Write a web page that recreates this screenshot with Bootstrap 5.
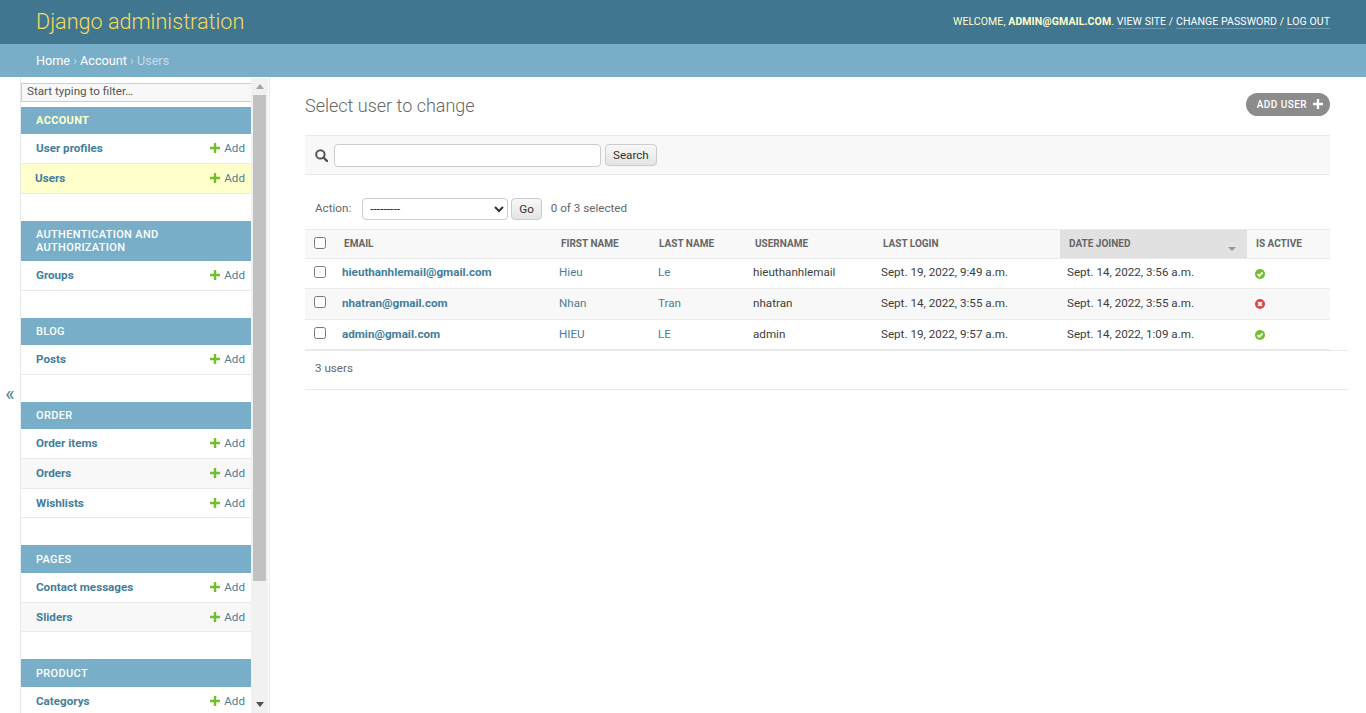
<!DOCTYPE html>
<html lang="en">
<head>
<meta charset="utf-8">
<title>Select user to change</title>
<link rel="stylesheet" href="https://cdn.jsdelivr.net/npm/bootstrap@5.3.0/dist/css/bootstrap.min.css">
<style>
html,body{height:100%}
body{font-family:Roboto,"Liberation Sans",sans-serif;font-size:13px;color:#333;background:#fff;overflow:hidden}
a{text-decoration:none;color:#447e9b}
.adm-head{height:44px;background:#417690;color:#ffc;padding:0 36px}
.adm-brand{font-size:21.6px;font-weight:300;color:#f5dd5d}
.adm-tools{font-size:10.5px;font-weight:400;letter-spacing:.09px;text-transform:uppercase;color:#ffc}
.adm-tools strong{font-weight:700;color:#ffc}
.adm-tools a{color:#fff;border-bottom:1px solid rgba(255,255,255,.25)}
.adm-crumbs{height:33px;background:#79aec8;color:#c4dce8;padding:0 36px 0;font-size:12.65px;font-weight:400}
.adm-crumbs span{padding-top:1px}
.adm-crumbs a{color:#fff}
.adm-main{height:636px}
.adm-toggle{width:21px;border-right:1px solid #eaeaea;color:#447e9b;font-size:20px;line-height:1;padding-bottom:2px}
.adm-side{width:249px;border-right:1px solid #eaeaea;padding-right:1px}
.adm-navcol{width:230px;padding-top:6px;overflow:hidden}
.adm-filter{display:block;width:230px;height:19px;border:1px solid #ccc;background:#f8f8f8;font-size:11.65px;color:#333;padding:0 5px 3px;margin-bottom:5px;line-height:normal;border-right:0}
.adm-filter::placeholder{color:#555;opacity:1}
.adm-block{margin-bottom:27px;width:230px}
.adm-cap{background:#79aec8;color:#fff;font-size:11px;font-weight:500;letter-spacing:.33px;text-transform:uppercase;padding:7px 15px;line-height:13px}
.adm-cap-tall{padding-top:8px}
.adm-cap-cur{color:#ffc;font-weight:700}
.adm-row{height:30px;border-bottom:1px solid #eaeaea;padding:0 6px 0 15px;font-size:11.65px;background:#fff}
.adm-row-short{height:29px;padding-top:1px}
.adm-row:nth-child(odd){background:#f8f8f8}
.adm-row.adm-cur{background:#ffc;padding-left:14px}
.adm-row b{font-weight:700;color:#447e9b}
.adm-addlink{color:#4f7d96;font-weight:400}
.adm-addlink svg{width:10px;height:10px;margin-right:4px}
.adm-sbar{width:17px;background:#f1f1f1;margin-top:1px}
.adm-sbtn{height:17px;color:#505050}
.adm-sbtn svg{width:8px;height:5px}
.adm-thumb{height:486px;background:#c1c1c1;margin:0 2px}
.adm-fill{flex:1}
.adm-content{padding:0 18px 0 35px}
.adm-title{font-size:18px;font-weight:300;color:#666;line-height:22px;margin:0;padding-top:18px}
.adm-addbtn{background:#8c8c8c;color:#fff;border-radius:15px;font-size:10px;font-weight:500;letter-spacing:.45px;text-transform:uppercase;height:23px;padding:0 7px 1px 11px;margin-top:16px}
.adm-addbtn svg{width:10px;height:10px;margin-left:6px}
.adm-box{width:1025px}
.adm-search{height:40px;background:#f8f8f8;border-top:1px solid #eaeaea;border-bottom:1px solid #eaeaea;padding:0 10px;margin-top:18px}
.adm-search svg{width:13px;height:13px;margin-right:6px}
.adm-search input{width:267px;height:23px;border:1px solid #ccc;border-radius:4px;background:#fff;padding:2px 5px;margin-right:4px}
.adm-btn{height:22px;background:linear-gradient(#f8f8f8,#e4e4e4);border:1px solid #ccc;border-radius:4px;font-size:11.65px;color:#333;padding:0 7px;line-height:20px}
.adm-action{height:54px;padding:23px 10px 9px;font-size:11.65px;color:#666}
.adm-action label{margin-right:11px}
.adm-action select{width:146px;height:22px;border:1px solid #ccc;border-radius:4px;background:#fff;font-size:12px;font-family:inherit;padding:0 3px;margin-right:3px;color:#333}
.adm-action span{margin-left:9px}
.adm-tbl{table-layout:fixed;width:1025px;border-collapse:collapse;font-size:11.65px;margin:0}
.adm-c0{width:29px}.adm-c1{width:217px}.adm-c2{width:99px}.adm-c3{width:95px}.adm-c4{width:128px}.adm-c5{width:187px}.adm-c6{width:187px}.adm-c7{width:83px}
.adm-tbl th{background:#f8f8f8;color:#666;font-size:10px;font-weight:700;text-transform:uppercase;height:29px;padding:0 0 1px 10px;border-top:1px solid #eaeaea;border-bottom:1px solid #eaeaea;position:relative}
.adm-tbl th:nth-child(4),.adm-tbl th:nth-child(7),.adm-tbl th:nth-child(8){padding-left:9px}
.adm-tbl th.adm-sorted{background:#e1e1e1}
.adm-tbl td{height:30px;padding:0 0 2px 8px;border-bottom:1px solid #eaeaea;color:#3d3d3d;background:#fff;vertical-align:middle}
.adm-tbl td:nth-child(7){padding-left:7px}
.adm-tbl tr.adm-even td{background:#f8f8f8}
.adm-tbl tr.adm-high td{height:31px}
.adm-tbl tr.adm-low td{padding-bottom:1px}
.adm-tbl tr.adm-base td{padding-bottom:0}
.adm-tbl td a{color:#4f7d96}
.adm-tbl td a.adm-strong{font-weight:700;color:#447e9b}
.adm-tbl tr td.adm-c0cell{padding:0 0 4px 9px}
.adm-tbl tr td.adm-statcell{padding-bottom:0}
.adm-tbl th:first-child{padding:0 0 2px 9px}
.adm-chk{display:block;width:12px;height:12px;margin:0;accent-color:#417690}
.adm-tbl svg.adm-stat{width:10px;height:10px;display:block}
.adm-arrow{position:absolute;right:11px;bottom:7px;width:0;height:0;border-left:4px solid transparent;border-right:4px solid transparent;border-top:4px solid #999}
.adm-pager{height:40px;border-top:1px solid #eaeaea;border-bottom:1px solid #eaeaea;font-size:11.65px;color:#666;padding:0 10px 2px}
</style>
</head>
<body>
<header class="adm-head d-flex align-items-center justify-content-between">
  <a class="adm-brand" href="#">Django administration</a>
  <div class="adm-tools">Welcome, <strong>admin@gmail.com</strong>. <a href="#">View site</a> / <a href="#">Change password</a> / <a href="#">Log out</a></div>
</header>
<div class="adm-crumbs d-flex align-items-center"><span><a href="#">Home</a> › <a href="#">Account</a> › Users</span></div>
<div class="adm-main d-flex">
  <div class="adm-toggle d-flex align-items-center justify-content-center">«</div>
  <aside class="adm-side d-flex">
    <div class="adm-navcol">
      <input class="adm-filter" placeholder="Start typing to filter…">
      <section class="adm-block">
        <div class="adm-cap adm-cap-cur">Account</div>
        <div class="adm-row d-flex align-items-center justify-content-between"><b>User profiles</b><a class="adm-addlink d-flex align-items-center" href="#"><svg viewBox="0 0 10 10"><path d="M3.8 0h2.4v3.8H10v2.4H6.2V10H3.8V6.2H0V3.8h3.8z" fill="#70bf2b"/></svg>Add</a></div>
        <div class="adm-row adm-cur d-flex align-items-center justify-content-between"><b>Users</b><a class="adm-addlink d-flex align-items-center" href="#"><svg viewBox="0 0 10 10"><path d="M3.8 0h2.4v3.8H10v2.4H6.2V10H3.8V6.2H0V3.8h3.8z" fill="#70bf2b"/></svg>Add</a></div>
      </section>
      <section class="adm-block">
        <div class="adm-cap">Authentication and Authorization</div>
        <div class="adm-row d-flex align-items-center justify-content-between"><b>Groups</b><a class="adm-addlink d-flex align-items-center" href="#"><svg viewBox="0 0 10 10"><path d="M3.8 0h2.4v3.8H10v2.4H6.2V10H3.8V6.2H0V3.8h3.8z" fill="#70bf2b"/></svg>Add</a></div>
      </section>
      <section class="adm-block">
        <div class="adm-cap">Blog</div>
        <div class="adm-row d-flex align-items-center justify-content-between"><b>Posts</b><a class="adm-addlink d-flex align-items-center" href="#"><svg viewBox="0 0 10 10"><path d="M3.8 0h2.4v3.8H10v2.4H6.2V10H3.8V6.2H0V3.8h3.8z" fill="#70bf2b"/></svg>Add</a></div>
      </section>
      <section class="adm-block">
        <div class="adm-cap">Order</div>
        <div class="adm-row d-flex align-items-center justify-content-between"><b>Order items</b><a class="adm-addlink d-flex align-items-center" href="#"><svg viewBox="0 0 10 10"><path d="M3.8 0h2.4v3.8H10v2.4H6.2V10H3.8V6.2H0V3.8h3.8z" fill="#70bf2b"/></svg>Add</a></div>
        <div class="adm-row d-flex align-items-center justify-content-between"><b>Orders</b><a class="adm-addlink d-flex align-items-center" href="#"><svg viewBox="0 0 10 10"><path d="M3.8 0h2.4v3.8H10v2.4H6.2V10H3.8V6.2H0V3.8h3.8z" fill="#70bf2b"/></svg>Add</a></div>
        <div class="adm-row adm-row-short d-flex align-items-center justify-content-between"><b>Wishlists</b><a class="adm-addlink d-flex align-items-center" href="#"><svg viewBox="0 0 10 10"><path d="M3.8 0h2.4v3.8H10v2.4H6.2V10H3.8V6.2H0V3.8h3.8z" fill="#70bf2b"/></svg>Add</a></div>
      </section>
      <section class="adm-block">
        <div class="adm-cap adm-cap-tall">Pages</div>
        <div class="adm-row d-flex align-items-center justify-content-between"><b>Contact messages</b><a class="adm-addlink d-flex align-items-center" href="#"><svg viewBox="0 0 10 10"><path d="M3.8 0h2.4v3.8H10v2.4H6.2V10H3.8V6.2H0V3.8h3.8z" fill="#70bf2b"/></svg>Add</a></div>
        <div class="adm-row adm-row-short d-flex align-items-center justify-content-between"><b>Sliders</b><a class="adm-addlink d-flex align-items-center" href="#"><svg viewBox="0 0 10 10"><path d="M3.8 0h2.4v3.8H10v2.4H6.2V10H3.8V6.2H0V3.8h3.8z" fill="#70bf2b"/></svg>Add</a></div>
      </section>
      <section class="adm-block">
        <div class="adm-cap adm-cap-tall">Product</div>
        <div class="adm-row d-flex align-items-center justify-content-between"><b>Categorys</b><a class="adm-addlink d-flex align-items-center" href="#"><svg viewBox="0 0 10 10"><path d="M3.8 0h2.4v3.8H10v2.4H6.2V10H3.8V6.2H0V3.8h3.8z" fill="#70bf2b"/></svg>Add</a></div>
      </section>
    </div>
    <div class="adm-sbar d-flex flex-column">
      <div class="adm-sbtn d-flex align-items-center justify-content-center"><svg viewBox="0 0 8 5"><path d="M4 0l4 5H0z" fill="#a3a3a3"/></svg></div>
      <div class="adm-thumb"></div>
      <div class="adm-fill"></div>
      <div class="adm-sbtn d-flex align-items-center justify-content-center"><svg viewBox="0 0 8 5"><path d="M0 0h8L4 5z" fill="#505050"/></svg></div>
    </div>
  </aside>
  <main class="adm-content flex-grow-1">
    <div class="adm-box d-flex justify-content-between align-items-start">
      <h1 class="adm-title">Select user to change</h1>
      <a class="adm-addbtn d-flex align-items-center" href="#">Add user<svg viewBox="0 0 10 10"><path d="M3.8 0h2.4v3.8H10v2.4H6.2V10H3.8V6.2H0V3.8h3.8z" fill="#fff"/></svg></a>
    </div>
    <div class="adm-box adm-search d-flex align-items-center">
      <svg viewBox="0 0 13 13"><circle cx="5.4" cy="5.4" r="4.2" fill="none" stroke="#555" stroke-width="2"/><path d="M8.5 8.5l3.6 3.6" stroke="#555" stroke-width="2.4" stroke-linecap="round"/></svg>
      <input type="text" aria-label="Search">
      <button class="adm-btn" type="button">Search</button>
    </div>
    <div class="adm-box adm-action d-flex align-items-center">
      <label>Action:</label>
      <select aria-label="Action"><option>---------</option></select>
      <button class="adm-btn" type="button">Go</button>
      <span>0 of 3 selected</span>
    </div>
    <table class="adm-tbl">
      <colgroup><col class="adm-c0"><col class="adm-c1"><col class="adm-c2"><col class="adm-c3"><col class="adm-c4"><col class="adm-c5"><col class="adm-c6"><col class="adm-c7"></colgroup>
      <thead><tr>
        <th><input class="adm-chk" type="checkbox" aria-label="Select all"></th>
        <th>Email</th><th>First name</th><th>Last name</th><th>Username</th><th>Last login</th>
        <th class="adm-sorted">Date joined<i class="adm-arrow"></i></th><th>Is active</th>
      </tr></thead>
      <tbody>
        <tr><td class="adm-c0cell"><input class="adm-chk" type="checkbox" aria-label="Select"></td><td><a class="adm-strong" href="#">hieuthanhlemail@gmail.com</a></td><td><a href="#">Hieu</a></td><td><a href="#">Le</a></td><td>hieuthanhlemail</td><td>Sept. 19, 2022, 9:49 a.m.</td><td>Sept. 14, 2022, 3:56 a.m.</td><td class="adm-statcell"><svg class="adm-stat" viewBox="0 0 10 10"><circle cx="5" cy="5" r="5" fill="#70bf2b"/><path d="M2.5 5.1l1.8 1.8 3.2-3.4" fill="none" stroke="#fff" stroke-width="1.9"/></svg></td></tr>
        <tr class="adm-even adm-high adm-low"><td class="adm-c0cell"><input class="adm-chk" type="checkbox" aria-label="Select"></td><td><a class="adm-strong" href="#">nhatran@gmail.com</a></td><td><a href="#">Nhan</a></td><td><a href="#">Tran</a></td><td>nhatran</td><td>Sept. 14, 2022, 3:55 a.m.</td><td>Sept. 14, 2022, 3:55 a.m.</td><td class="adm-statcell"><svg class="adm-stat" viewBox="0 0 10 10"><circle cx="5" cy="5" r="5" fill="#dd4646"/><path d="M3.2 3.2l3.6 3.6M6.8 3.2L3.2 6.8" fill="none" stroke="#fff" stroke-width="1.9"/></svg></td></tr>
        <tr class="adm-base"><td class="adm-c0cell"><input class="adm-chk" type="checkbox" aria-label="Select"></td><td><a class="adm-strong" href="#">admin@gmail.com</a></td><td><a href="#">HIEU</a></td><td><a href="#">LE</a></td><td>admin</td><td>Sept. 19, 2022, 9:57 a.m.</td><td>Sept. 14, 2022, 1:09 a.m.</td><td class="adm-statcell"><svg class="adm-stat" viewBox="0 0 10 10"><circle cx="5" cy="5" r="5" fill="#70bf2b"/><path d="M2.5 5.1l1.8 1.8 3.2-3.4" fill="none" stroke="#fff" stroke-width="1.9"/></svg></td></tr>
      </tbody>
    </table>
    <div class="adm-pager d-flex align-items-center">3 users</div>
  </main>
</div>
<script src="https://cdn.jsdelivr.net/npm/bootstrap@5.3.0/dist/js/bootstrap.bundle.min.js"></script>
</body>
</html>
